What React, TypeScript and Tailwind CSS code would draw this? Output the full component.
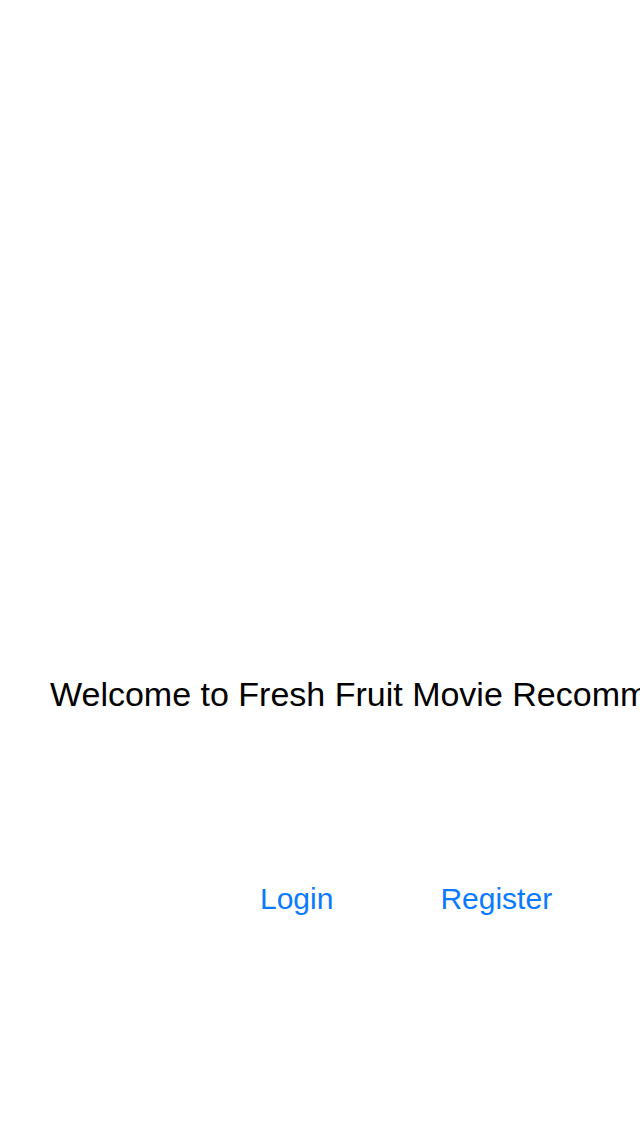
export default function App() {
    return (
        <div
            className="w-[640px] h-[1136px] bg-white overflow-hidden flex flex-col"
            style={{ fontFamily: '"Liberation Sans", Arial, sans-serif' }}
        >
            {/* Welcome title */}
            <div className="pt-[674px] pl-[50px]">
                <p className="text-[34px] leading-[40px] text-black whitespace-nowrap">
                    Welcome to Fresh Fruit Movie Recommendations
                </p>
            </div>

            {/* Actions */}
            <div className="mt-[167px] pl-[260px] flex items-center">
                <button className="text-[30px] leading-[36px] text-[#0a7aff]">Login</button>
                <button className="ml-[107px] text-[30px] leading-[36px] text-[#0a7aff]">Register</button>
            </div>
        </div>
    );
}
